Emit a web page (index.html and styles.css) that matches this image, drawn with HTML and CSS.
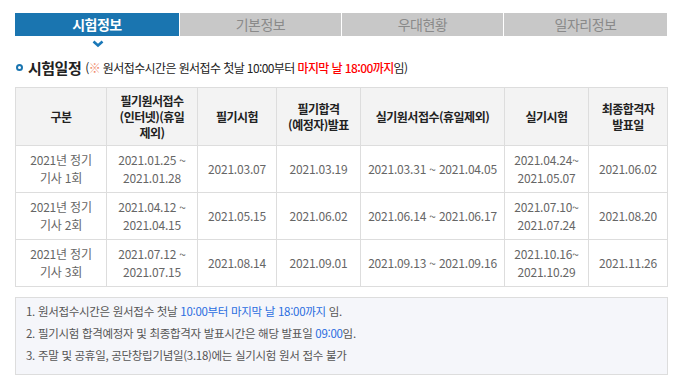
FILE: index.html
```html
<!DOCTYPE html>
<html lang="ko">
<head>
<meta charset="utf-8">
<link rel="stylesheet" href="styles.css">
</head>
<body>
<div class="wrap">
  <nav class="tabs">
    <div class="tab active">시험정보</div>
    <div class="tab">기본정보</div>
    <div class="tab">우대현황</div>
    <div class="tab">일자리정보</div>
  </nav>
  <div class="chev-row">
    <svg class="chev" width="12" height="8" viewBox="0 0 12 8"><path d="M1.5 1.5 L6 5.5 L10.5 1.5" fill="none" stroke="#1a78b8" stroke-width="2.6"/></svg>
  </div>
  <h2 class="title"><span class="dot"></span><span class="tmain">시험일정</span><span class="tsub">(<span class="mark">※</span> 원서접수시간은 원서접수 첫날 10:00부터 <span class="red">마지막 날 18:00까지</span>임)</span></h2>
  <table class="sched">
    <colgroup>
      <col style="width:91px"><col style="width:91px"><col style="width:79px"><col style="width:84px"><col style="width:144px"><col style="width:84px"><col style="width:79px">
    </colgroup>
    <thead>
      <tr>
        <th>구분</th>
        <th>필기원서접수<br>(인터넷)(휴일<br>제외)</th>
        <th>필기시험</th>
        <th>필기합격<br>(예정자)발표</th>
        <th>실기원서접수(휴일제외)</th>
        <th>실기시험</th>
        <th>최종합격자<br>발표일</th>
      </tr>
    </thead>
    <tbody>
      <tr>
        <td>2021년 정기<br>기사 1회</td>
        <td>2021.01.25 ~<br>2021.01.28</td>
        <td>2021.03.07</td>
        <td>2021.03.19</td>
        <td>2021.03.31 ~ 2021.04.05</td>
        <td>2021.04.24~<br>2021.05.07</td>
        <td>2021.06.02</td>
      </tr>
      <tr>
        <td>2021년 정기<br>기사 2회</td>
        <td>2021.04.12 ~<br>2021.04.15</td>
        <td>2021.05.15</td>
        <td>2021.06.02</td>
        <td>2021.06.14 ~ 2021.06.17</td>
        <td>2021.07.10~<br>2021.07.24</td>
        <td>2021.08.20</td>
      </tr>
      <tr>
        <td>2021년 정기<br>기사 3회</td>
        <td>2021.07.12 ~<br>2021.07.15</td>
        <td>2021.08.14</td>
        <td>2021.09.01</td>
        <td>2021.09.13 ~ 2021.09.16</td>
        <td>2021.10.16~<br>2021.10.29</td>
        <td>2021.11.26</td>
      </tr>
    </tbody>
  </table>
  <div class="notes">
    <p>1. 원서접수시간은 원서접수 첫날 <span class="blue">10:00부터 마지막 날 18:00까지</span> 임.</p>
    <p>2. 필기시험 합격예정자 및 최종합격자 발표시간은 해당 발표일 <span class="blue">09:00</span>임.</p>
    <p>3. 주말 및 공휴일, 공단창립기념일(3.18)에는 실기시험 원서 접수 불가</p>
  </div>
</div>
</body>
</html>
```

FILE: styles.css
```css
* { box-sizing: border-box; }
html, body { margin: 0; padding: 0; background: #fff; }
body {
  font-family: "Noto Sans CJK KR", "Noto Sans", sans-serif;
  color: #333;
}
.wrap {
  width: 653px;
  margin-left: 15px;
  padding-top: 13px;
}
.tabs {
  display: grid;
  grid-template-columns: 164px 161px 161px 163px;
  column-gap: 1px;
  height: 23px;
}
.tab {
  background: #c8c8c8;
  color: #8a8a8a;
  font-size: 14px;
  line-height: 23px;
  text-align: center;
  letter-spacing: -0.5px;
}
.tab.active {
  background: #1a75b0;
  color: #fff;
  font-weight: bold;
}
.chev-row {
  height: 20px;
  padding-left: 77px;
  padding-top: 4px;
}
.chev { display: block; }
.title {
  display: flex;
  align-items: center;
  margin: 0;
  height: 22px;
  font-weight: normal;
  white-space: nowrap;
}
.dot {
  width: 7px;
  height: 7px;
  border-radius: 50%;
  border: 2px solid #1a75b0;
  background: #fff;
  margin-left: 1px;
  margin-right: 5px;
}
.tmain {
  font-size: 15px;
  font-weight: bold;
  color: #222;
  letter-spacing: -0.5px;
}
.tsub {
  font-size: 12px;
  color: #222;
  letter-spacing: -0.6px;
  margin-left: 4px;
}
.mark { color: #f08a6a; }
.red { color: #f00; font-weight: 500; }
.sched {
  margin-top: 9px;
  width: 653px;
  border-collapse: collapse;
  table-layout: fixed;
  font-size: 12px;
}
.sched th, .sched td {
  border: 1px solid #ddd;
  text-align: center;
  vertical-align: middle;
  padding: 0 2px;
}
.sched th {
  background: #f3f3f3;
  color: #222;
  font-weight: bold;
  height: 58px;
  line-height: 16px;
  letter-spacing: -0.5px;
}
.sched td {
  color: #666;
  height: 47px;
  line-height: 18px;
  letter-spacing: -0.2px;
}
.notes {
  margin-top: 10px;
  width: 653px;
  height: 78px;
  background: #f5f6fa;
  border: 1px solid #ddd;
  padding: 2px 10px 0 10px;
}
.notes p {
  margin: 0;
  font-size: 11.5px;
  line-height: 22px;
  color: #555;
  letter-spacing: -0.3px;
}
.blue { color: #2a6de0; }
```
